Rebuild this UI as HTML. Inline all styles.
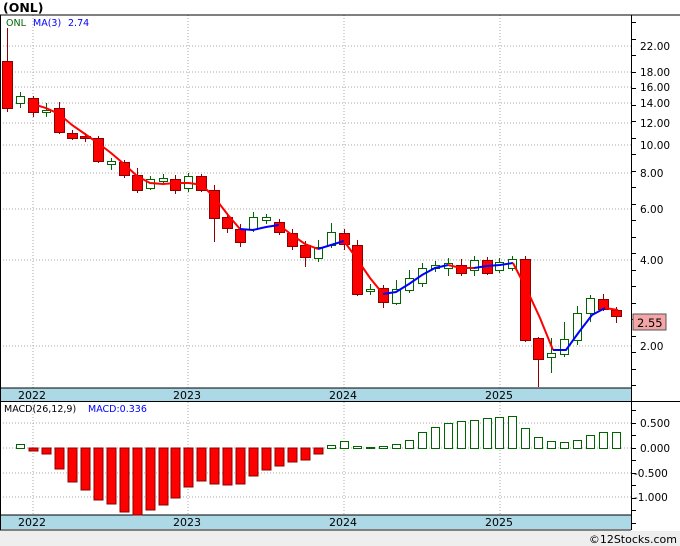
<!DOCTYPE html>
<html><head><meta charset="utf-8"><style>
html,body{margin:0;padding:0;background:#fff;}
svg{display:block;font-family:"DejaVu Sans","Liberation Sans",sans-serif;}
</style></head><body>
<svg id="s" width="680" height="546" xmlns="http://www.w3.org/2000/svg"></svg>
<script>
var s=document.getElementById('s');var h='';
function L(x1,y1,x2,y2,c,w,d){h+='<line x1="'+x1+'" y1="'+y1+'" x2="'+x2+'" y2="'+y2+'" stroke="'+c+'" stroke-width="'+(w||1)+'"'+(d?' stroke-dasharray="'+d+'"':'')+'/>';}
function R(x,y,w,hh,f,st){h+='<rect x="'+x+'" y="'+y+'" width="'+w+'" height="'+hh+'" fill="'+f+'"'+(st?' stroke="'+st+'"':'')+'/>';}
function T(x,y,t,c,sz,a,b){h+='<text x="'+x+'" y="'+y+'" fill="'+c+'" font-size="'+sz+'"'+(a?' text-anchor="'+a+'"':'')+(b?' font-weight="bold"':'')+'>'+t+'</text>';}
R(0,0,680,546,'#fff');
R(0,531,680,15,'#eeeeee');
T(3,12,'(ONL)','#000',12.5,null,1);
var py=[[22,46],[18,72],[16,87],[14,103],[12,123],[10,145],[8,173],[6,209],[4,260],[2,346]];
py.forEach(function(p){L(0,p[1],631,p[1],'#aaa',1,'1,2');});
[33,188,344,500].forEach(function(x){L(x,15,x,388,'#aaa',1,'1,2');L(x,402,x,515,'#aaa',1,'1,2');});
[423,448,473,497].forEach(function(y){L(0,y,631,y,'#aaa',1,'1,2');});
R(0,388,631,13,'#add8e6');R(0,515,631,14,'#add8e6');
L(0,388,631,388,'#000');L(0,515,631,515,'#000');
[[33,'2022'],[188,'2023'],[344,'2024'],[500,'2025']].forEach(function(d){T(d[0]-15,399,d[1],'#000',11);T(d[0]-15,526,d[1],'#000',11);});
L(0,15,680,15,'#000');L(0,401.5,680,401.5,'#000');L(631.5,15,631.5,530,'#000');L(0,530,631,530,'#000');L(0.5,15,0.5,530,'#000');
for(var y=22;y<388;y+=16.5)L(631,Math.round(y)+.5,636,Math.round(y)+.5,'#000');
for(var y=410;y<530;y+=12.5)L(631,Math.round(y)+.5,636,Math.round(y)+.5,'#000');
py.forEach(function(p){T(640,p[1]+4,p[0].toFixed(2),'#000',10.5);});
[[423,'0.500'],[448,'0.000'],[473,'-0.500'],[497,'-1.000']].forEach(function(p){T(p[1].charAt(0)=='-'?634:640,p[0]+4,p[1],'#000',10.5);});
var cd=[['r',61,108,28,112],['g',96,103,92,108],['r',98,112,96,117],['g',110,112,103,117],['r',108,132,102,134],['r',133,138,130,140],['r',136,138,133,142],['r',138,161,136,163],['g',161,164,158,170],['r',162,175,160,178],['r',175,190,168,193],['g',179,188,176,190],['g',178,181,174,185],['r',179,190,175,194],['g',176,188,173,192],['r',176,190,174,192],['r',190,218,185,242],['r',217,228,213,233],['r',229,242,224,247],['g',217,229,212,232],['g',217,220,214,224],['r',222,232,219,235],['r',233,246,229,250],['r',245,257,241,267],['g',247,258,240,262],['g',232,245,223,248],['r',233,244,229,250],['r',245,294,240,296],['g',289,291,284,295],['r',288,302,285,308],['g',289,303,280,305],['g',278,290,270,293],['g',268,283,263,287],['g',265,268,261,272],['g',263,268,258,276],['r',265,273,259,276],['g',260,270,256,276],['r',260,273,257,275],['g',262,270,258,273],['g',259,268,256,271],['r',259,340,256,342],['r',338,359,337,387],['g',353,357,338,373],['g',339,354,322,357],['g',313,340,306,345],['g',298,313,295,322],['r',299,309,294,311],['r',310,316,307,323]];
cd.forEach(function(c,i){var x=Math.round(7+12.96*i);var col=c[0]=='r'?'#8b0000':'#006400';
L(x+.5,c[3],x+.5,c[4],col);
if(c[0]=='r')R(x-4.5,c[1]+.5,10,c[2]-c[1],'#ff0000','#8b0000');else R(x-3.5,c[1]+.5,8,Math.max(2,c[2]-c[1]),'#fff','#006400');});
var segs=[['#ff0000','33,104 46,108 59,114 72,125 85,134 98,143 111,153 124,164 137,176 150,183 163,184 176,183 189,183 202,185 215,198 228,215 240,229'],['#0000ff','240,229 253,230 266,227 279,225'],['#ff0000','279,225 292,235 305,244 318,249'],['#0000ff','318,249 331,245 344,241'],['#ff0000','344,241 357,259 370,278 383,294'],['#0000ff','383,294 396,292 409,284 422,275 435,268 448,265'],['#ff0000','448,265 461,268 474,268'],['#0000ff','474,268 487,266 500,265 513,263'],['#ff0000','513,263 527,290 540,318 553,350'],['#0000ff','553,350 566,350 579,332 592,315 605,308'],['#ff0000','605,308 618,310']];
segs.forEach(function(g){h+='<polyline points="'+g[1]+'" fill="none" stroke="'+g[0]+'" stroke-width="2"/>';});
var mv=[null,444,451,454,469,482,490,500,504,512,515,510,505,498,487,481,484,485,484,476,470,466,462,460,454,445,441,446,447,446,444,440,432,427,423,421,420,418,417,416,428,437,441,442,440,435,432,432];
mv.forEach(function(v,i){if(v===null)return;var x=Math.round(7+12.96*i);if(v>448)R(x-4,448,9,v-448,'#ff0000','#8b0000');else R(x-3.5,v+.5,8,448-v,'#fff','#006400');});
R(633,314,33,16,'#f4a6a6','#555');T(637,327,'2.55','#000',11.5);
T(6,26,'ONL','#006400',9.5);T(33,26,'MA(3)','#0000ff',9.5);T(68,26,'2.74','#0000ff',9.5);
T(4,412,'MACD(26,12,9)','#000',9.5);T(88,412,'MACD:0.336','#0000ff',9.5);
T(677,543,'©12Stocks.com','#000',11,'end');
s.innerHTML=h;
</script>
</body></html>
